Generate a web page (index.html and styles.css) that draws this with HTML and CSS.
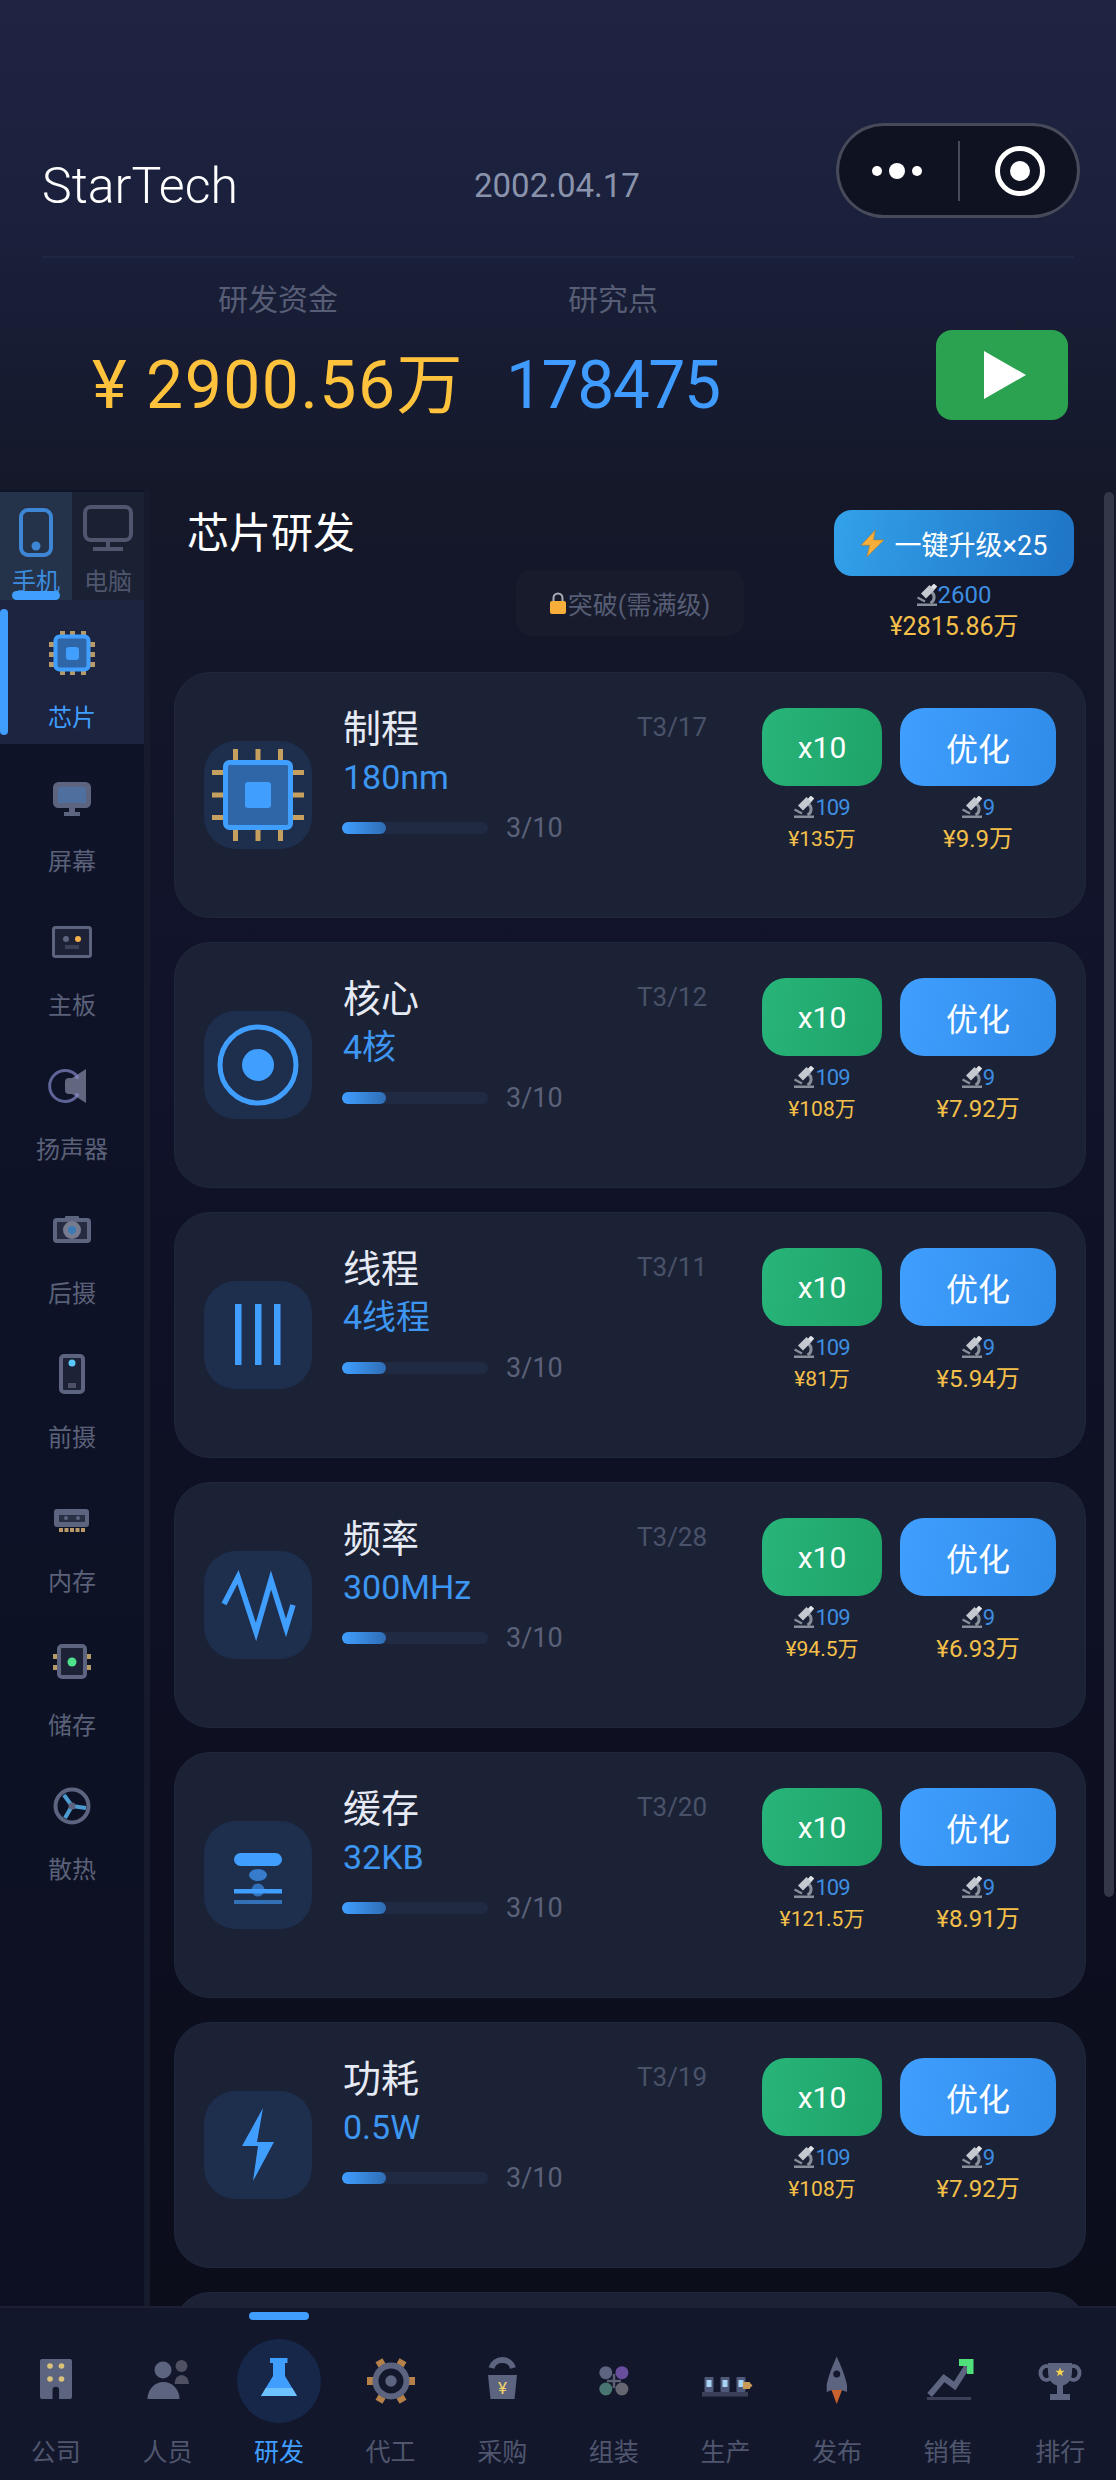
FILE: index.html
```html
<!DOCTYPE html>
<html lang="zh-CN">
  <head>
    <meta charset="UTF-8" />
    <meta name="viewport" content="width=device-width, initial-scale=1.0" />
    <title>StarTech</title>
    <link rel="stylesheet" href="styles.css">
  </head>
  <body>
    <svg class="defs" width="0" height="0">
      <symbol id="scope" viewBox="0 0 20 22">
        <path d="M0 19.500h20V22H0z" fill="#87909a"/>
        <path d="M0.500 13.500L8 17.500" stroke="#87909a" stroke-width="2.400" fill="none"/>
        <path d="M14.500 8a6.500 6.500 0 0 1-1 11" stroke="#87909a" stroke-width="3" fill="none"/>
        <path d="M15 3.500L6.500 12" stroke="#c4c9d0" stroke-width="7" fill="none"/>
        <path d="M18.500 1L15.500 4.500" stroke="#dfe2e6" stroke-width="4.500" fill="none"/>
      </symbol>
    </svg>

    <header class="top">
      <div class="capsule">
        <svg width="240" height="95" viewBox="0 0 240 95">
          <circle cx="39" cy="48" r="5" fill="#fff"/>
          <circle cx="59" cy="48" r="8" fill="#fff"/>
          <circle cx="79" cy="48" r="5" fill="#fff"/>
          <rect x="120" y="18" width="2" height="60" fill="#474a5a"/>
          <circle cx="182" cy="48" r="22.500" fill="none" stroke="#fff" stroke-width="5"/>
          <circle cx="182" cy="48" r="10" fill="#fff"/>
        </svg>
      </div>
      <div class="top-bar">
        <div class="brand">StarTech</div>
        <div class="date">2002.04.17</div>
      </div>
      <div class="stats">
        <div class="stat stat-money">
          <div class="stat-label">研发资金</div>
          <div class="stat-value money">¥ 2900.56万</div>
        </div>
        <div class="stat stat-points">
          <div class="stat-label">研究点</div>
          <div class="stat-value points">178475</div>
        </div>
        <button class="play">
          <svg width="42" height="48" viewBox="0 0 42 48"><path d="M0 0L42 24 0 48z" fill="#fff"/></svg>
        </button>
      </div>
    </header>

    <main class="main">
      <aside class="sidebar">
        <div class="device-tabs">
          <div class="device device-active">
            <svg width="72" height="66" viewBox="0 0 72 66">
              <rect x="21" y="18" width="30" height="45" rx="7" fill="none" stroke="#3d86d6" stroke-width="4"/>
              <circle cx="36" cy="54" r="4.500" fill="#3d86d6"/>
            </svg>
            <span>手机</span>
          </div>
          <div class="device">
            <svg width="72" height="66" viewBox="0 0 72 66">
              <rect x="13" y="15" width="46" height="33" rx="6" fill="none" stroke="#4f566e" stroke-width="4"/>
              <rect x="34" y="50" width="4" height="6" fill="#4f566e"/>
              <rect x="21" y="55" width="30" height="4" fill="#4f566e"/>
            </svg>
            <span>电脑</span>
          </div>
        </div>

        <div class="side-item side-active">
          <svg width="48" height="48" viewBox="0 0 48 48">
            <g fill="#b89a68">
              <rect x="12" y="2" width="5" height="6"/><rect x="22" y="2" width="5" height="6"/><rect x="33" y="2" width="5" height="6"/>
              <rect x="12" y="40" width="5" height="6"/><rect x="22" y="40" width="5" height="6"/><rect x="33" y="40" width="5" height="6"/>
              <rect x="1" y="13" width="6" height="5"/><rect x="1" y="23" width="6" height="5"/><rect x="1" y="33" width="6" height="5"/>
              <rect x="41" y="13" width="6" height="5"/><rect x="41" y="23" width="6" height="5"/><rect x="41" y="33" width="6" height="5"/>
            </g>
            <rect x="7.500" y="7.500" width="33" height="33" rx="4" fill="#2f66a8" stroke="#409eff" stroke-width="4"/>
            <rect x="18" y="18" width="13" height="13" rx="3" fill="#409eff"/>
          </svg>
          <span>芯片</span>
        </div>
        <div class="side-item">
          <svg width="48" height="48" viewBox="0 0 48 48">
            <rect x="7.500" y="11.500" width="33" height="21" rx="3" fill="#4f6f9e" stroke="#5d6480" stroke-width="5"/>
            <rect x="21" y="35" width="6" height="4" fill="#5d6480"/>
            <rect x="16" y="39" width="16" height="4" fill="#5d6480"/>
          </svg>
          <span>屏幕</span>
        </div>
        <div class="side-item">
          <svg width="48" height="48" viewBox="0 0 48 48">
            <rect x="5.500" y="10.500" width="37" height="29" rx="2" fill="#1d2236" stroke="#5d6480" stroke-width="3"/>
            <circle cx="18" cy="22" r="3" fill="#5d6480"/>
            <circle cx="30" cy="22" r="3" fill="#f5b04c"/>
            <rect x="17" y="28" width="14" height="4" fill="#3b4058"/>
          </svg>
          <span>主板</span>
        </div>
        <div class="side-item">
          <svg width="48" height="48" viewBox="0 0 48 48">
            <path d="M29 15a15.500 15.500 0 1 0 0 20" fill="none" stroke="#5f6499" stroke-width="3"/>
            <rect x="17" y="17" width="10" height="16" rx="4" fill="#62677f"/>
            <path d="M24 17L38 8V42L24 33z" fill="#62677f"/>
            <circle cx="29" cy="16" r="2" fill="#7d80b8"/>
            <circle cx="29" cy="34" r="2" fill="#7d80b8"/>
          </svg>
          <span>扬声器</span>
        </div>
        <div class="side-item">
          <svg width="48" height="48" viewBox="0 0 48 48">
            <rect x="17" y="11" width="14" height="4" rx="1" fill="#5d6480"/>
            <rect x="7" y="15" width="34" height="21" rx="2" fill="#272b42" stroke="#5d6480" stroke-width="4"/>
            <circle cx="24" cy="25" r="9" fill="#767b90"/>
            <circle cx="24" cy="25" r="4" fill="#3a7ab5"/>
          </svg>
          <span>后摄</span>
        </div>
        <div class="side-item">
          <svg width="48" height="48" viewBox="0 0 48 48">
            <rect x="13" y="7" width="22" height="36" rx="3" fill="#1d2236" stroke="#5d6480" stroke-width="4"/>
            <circle cx="24" cy="14" r="3.500" fill="#5ac8ff"/>
            <rect x="20" y="34" width="8" height="5" fill="#4b5068"/>
          </svg>
          <span>前摄</span>
        </div>
        <div class="side-item">
          <svg width="48" height="48" viewBox="0 0 48 48">
            <rect x="6" y="16" width="35" height="18" rx="3" fill="#5d6480"/>
            <rect x="11" y="22" width="26" height="7" fill="#2b2f45"/>
            <circle cx="18" cy="25" r="2" fill="#5d6480"/>
            <circle cx="30" cy="25" r="2" fill="#5d6480"/>
            <g fill="#b89a68">
              <rect x="11" y="35" width="4" height="4"/><rect x="16.500" y="35" width="4" height="4"/><rect x="22" y="35" width="4" height="4"/><rect x="27.500" y="35" width="4" height="4"/><rect x="33" y="35" width="4" height="4"/>
            </g>
          </svg>
          <span>内存</span>
        </div>
        <div class="side-item">
          <svg width="48" height="48" viewBox="0 0 48 48">
            <g fill="#b89a68">
              <rect x="5" y="17" width="6" height="5"/><rect x="5" y="28" width="6" height="5"/>
              <rect x="37" y="17" width="6" height="5"/><rect x="37" y="28" width="6" height="5"/>
            </g>
            <rect x="11" y="9" width="26" height="31" rx="3" fill="#1d2236" stroke="#5d6480" stroke-width="4"/>
            <circle cx="24" cy="25" r="4.500" fill="#4ee08a"/>
          </svg>
          <span>储存</span>
        </div>
        <div class="side-item">
          <svg width="48" height="48" viewBox="0 0 48 48">
            <g stroke="#4b9bd0" stroke-width="4"><path d="M24 25L16 14"/><path d="M24 25L38 27"/><path d="M24 25L17 37"/></g>
            <circle cx="24" cy="25" r="16.500" fill="none" stroke="#5d6480" stroke-width="4"/>
            <circle cx="24" cy="25" r="3.500" fill="#5d6480"/>
          </svg>
          <span>散热</span>
        </div>
      </aside>

      <section class="content">
        <div class="scroll-thumb"></div>
        <div class="head">
          <h1 class="head-title">芯片研发</h1>
          <div class="locked">
            <svg width="16" height="22" viewBox="0 0 16 22">
              <path d="M3.500 10V6a4.500 4.500 0 0 1 9 0v4" fill="none" stroke="#a9adb8" stroke-width="2"/>
              <rect y="9" width="16" height="13" rx="2" fill="#f8ae3a"/>
            </svg>
            <span>突破(需满级)</span>
          </div>
          <div class="upgrade-all">
            <button class="upgrade-btn">
              <svg width="23" height="27" viewBox="0 0 24 30" preserveAspectRatio="none"><path d="M15 0L0 17h9L6 30 24 11H13z" fill="#f8ae3a" stroke="#a8752a" stroke-width=".6"/></svg>
              <span>一键升级×25</span>
            </button>
            <div class="cost"><svg class="scope" width="20" height="22"><use href="#scope"/></svg>2600</div>
            <div class="price">¥2815.86万</div>
          </div>
        </div>

        <div class="cards">
          <div class="card">
            <svg class="card-icon" width="108" height="108" viewBox="0 0 108 108">
              <g fill="#c5a05f">
                <rect x="29" y="8" width="5" height="11"/><rect x="51.500" y="8" width="5" height="11"/><rect x="74" y="8" width="5" height="11"/>
                <rect x="29" y="89" width="5" height="11"/><rect x="51.500" y="89" width="5" height="11"/><rect x="74" y="89" width="5" height="11"/>
                <rect x="8" y="29" width="11" height="5"/><rect x="8" y="51.500" width="11" height="5"/><rect x="8" y="74" width="11" height="5"/>
                <rect x="89" y="29" width="11" height="5"/><rect x="89" y="51.500" width="11" height="5"/><rect x="89" y="74" width="11" height="5"/>
              </g>
              <rect x="21.500" y="21.500" width="65" height="65" rx="4" fill="#2f66a8" stroke="#409eff" stroke-width="5"/>
              <rect x="41" y="41" width="26" height="26" rx="3" fill="#409eff"/>
            </svg>
            <div class="info">
              <div class="info-top"><div class="name">制程</div><div class="tier">T3/17</div></div>
              <div class="spec">180nm</div>
              <div class="level"><div class="bar"><div class="bar-fill"></div></div><span>3/10</span></div>
            </div>
            <div class="actions">
              <div class="action"><button class="btn btn-green">x10</button><div class="cost"><svg class="scope" width="20" height="22"><use href="#scope"/></svg>109</div><div class="price">¥135万</div></div>
              <div class="action"><button class="btn btn-blue">优化</button><div class="cost"><svg class="scope" width="20" height="22"><use href="#scope"/></svg>9</div><div class="price price-big">¥9.9万</div></div>
            </div>
          </div>

          <div class="card">
            <svg class="card-icon" width="108" height="108" viewBox="0 0 108 108">
              <circle cx="54" cy="54" r="38" fill="none" stroke="#409eff" stroke-width="5"/>
              <circle cx="54" cy="54" r="16" fill="#409eff"/>
            </svg>
            <div class="info">
              <div class="info-top"><div class="name">核心</div><div class="tier">T3/12</div></div>
              <div class="spec">4核</div>
              <div class="level"><div class="bar"><div class="bar-fill"></div></div><span>3/10</span></div>
            </div>
            <div class="actions">
              <div class="action"><button class="btn btn-green">x10</button><div class="cost"><svg class="scope" width="20" height="22"><use href="#scope"/></svg>109</div><div class="price">¥108万</div></div>
              <div class="action"><button class="btn btn-blue">优化</button><div class="cost"><svg class="scope" width="20" height="22"><use href="#scope"/></svg>9</div><div class="price price-big">¥7.92万</div></div>
            </div>
          </div>

          <div class="card">
            <svg class="card-icon" width="108" height="108" viewBox="0 0 108 108">
              <g fill="#409eff"><rect x="31" y="23" width="6.500" height="61"/><rect x="51" y="23" width="6.500" height="61"/><rect x="70" y="23" width="6.500" height="61"/></g>
            </svg>
            <div class="info">
              <div class="info-top"><div class="name">线程</div><div class="tier">T3/11</div></div>
              <div class="spec">4线程</div>
              <div class="level"><div class="bar"><div class="bar-fill"></div></div><span>3/10</span></div>
            </div>
            <div class="actions">
              <div class="action"><button class="btn btn-green">x10</button><div class="cost"><svg class="scope" width="20" height="22"><use href="#scope"/></svg>109</div><div class="price">¥81万</div></div>
              <div class="action"><button class="btn btn-blue">优化</button><div class="cost"><svg class="scope" width="20" height="22"><use href="#scope"/></svg>9</div><div class="price price-big">¥5.94万</div></div>
            </div>
          </div>

          <div class="card">
            <svg class="card-icon" width="108" height="108" viewBox="0 0 108 108">
              <path d="M20 53L34 26 52 81 67 29 82 77 89 54" fill="none" stroke="#409eff" stroke-width="5.500"/>
            </svg>
            <div class="info">
              <div class="info-top"><div class="name">频率</div><div class="tier">T3/28</div></div>
              <div class="spec">300MHz</div>
              <div class="level"><div class="bar"><div class="bar-fill"></div></div><span>3/10</span></div>
            </div>
            <div class="actions">
              <div class="action"><button class="btn btn-green">x10</button><div class="cost"><svg class="scope" width="20" height="22"><use href="#scope"/></svg>109</div><div class="price">¥94.5万</div></div>
              <div class="action"><button class="btn btn-blue">优化</button><div class="cost"><svg class="scope" width="20" height="22"><use href="#scope"/></svg>9</div><div class="price price-big">¥6.93万</div></div>
            </div>
          </div>

          <div class="card">
            <svg class="card-icon" width="108" height="108" viewBox="0 0 108 108">
              <rect x="30" y="32" width="48" height="13" rx="6.500" fill="#409eff"/>
              <ellipse cx="54" cy="54" rx="9" ry="6" fill="#409eff" opacity=".7"/>
              <rect x="30" y="68" width="48" height="4.500" fill="#409eff"/>
              <ellipse cx="54" cy="69" rx="6.500" ry="6.500" fill="#409eff" opacity=".6"/>
              <rect x="30" y="79" width="48" height="4" fill="#409eff" opacity=".6"/>
            </svg>
            <div class="info">
              <div class="info-top"><div class="name">缓存</div><div class="tier">T3/20</div></div>
              <div class="spec">32KB</div>
              <div class="level"><div class="bar"><div class="bar-fill"></div></div><span>3/10</span></div>
            </div>
            <div class="actions">
              <div class="action"><button class="btn btn-green">x10</button><div class="cost"><svg class="scope" width="20" height="22"><use href="#scope"/></svg>109</div><div class="price">¥121.5万</div></div>
              <div class="action"><button class="btn btn-blue">优化</button><div class="cost"><svg class="scope" width="20" height="22"><use href="#scope"/></svg>9</div><div class="price price-big">¥8.91万</div></div>
            </div>
          </div>

          <div class="card">
            <svg class="card-icon" width="108" height="108" viewBox="0 0 108 108">
              <path d="M59 17L38 55H54L49 90 70 51H53z" fill="#409eff"/>
            </svg>
            <div class="info">
              <div class="info-top"><div class="name">功耗</div><div class="tier">T3/19</div></div>
              <div class="spec">0.5W</div>
              <div class="level"><div class="bar"><div class="bar-fill"></div></div><span>3/10</span></div>
            </div>
            <div class="actions">
              <div class="action"><button class="btn btn-green">x10</button><div class="cost"><svg class="scope" width="20" height="22"><use href="#scope"/></svg>109</div><div class="price">¥108万</div></div>
              <div class="action"><button class="btn btn-blue">优化</button><div class="cost"><svg class="scope" width="20" height="22"><use href="#scope"/></svg>9</div><div class="price price-big">¥7.92万</div></div>
            </div>
          </div>

          <div class="card"></div>
        </div>
      </section>
    </main>

    <nav class="tabbar">
      <div class="tab">
        <svg width="84" height="84" viewBox="0 0 84 84">
          <rect x="26" y="20" width="32" height="40" rx="2" fill="#5d6480"/>
          <g fill="#d9c27a"><circle cx="36" cy="27" r="2.800"/><circle cx="47.500" cy="27" r="2.800"/><circle cx="36" cy="40" r="2.800"/><circle cx="47.500" cy="40" r="2.800"/></g>
          <path d="M38.500 60V51a3.300 3.300 0 0 1 6.600 0v9z" fill="#14182c"/>
        </svg>
        <span>公司</span>
      </div>
      <div class="tab">
        <svg width="84" height="84" viewBox="0 0 84 84">
          <circle cx="56.500" cy="27" r="6" fill="#4f5163"/>
          <path d="M49.500 45a7.200 9 0 0 1 14.500 0z" fill="#4f5163"/>
          <circle cx="38" cy="31" r="8.500" fill="#5d6480"/>
          <path d="M22.500 60a16 17 0 0 1 32 0z" fill="#5d6480"/>
        </svg>
        <span>人员</span>
      </div>
      <div class="tab tab-active">
        <svg width="84" height="84" viewBox="0 0 84 84">
          <path d="M33 19H50.500V24H48V37L60 57H24L36 37V24H33z" fill="#409eff"/>
          <path d="M28.800 49H55.200L60 57H24z" fill="#6ec1ff"/>
        </svg>
        <span>研发</span>
      </div>
      <div class="tab">
        <svg width="84" height="84" viewBox="0 0 84 84">
          <g fill="#b58148">
            <rect x="18" y="38" width="6" height="8"/><rect x="60" y="38" width="6" height="8"/>
            <rect x="18" y="38" width="6" height="8" transform="rotate(60 42 42)"/><rect x="60" y="38" width="6" height="8" transform="rotate(60 42 42)"/>
            <rect x="18" y="38" width="6" height="8" transform="rotate(120 42 42)"/><rect x="60" y="38" width="6" height="8" transform="rotate(120 42 42)"/>
          </g>
          <circle cx="42" cy="42" r="15.500" fill="#14182c" stroke="#5d6480" stroke-width="6"/>
          <circle cx="42" cy="42" r="5.700" fill="#5d6480"/>
        </svg>
        <span>代工</span>
      </div>
      <div class="tab">
        <svg width="84" height="84" viewBox="0 0 84 84">
          <path d="M31.500 29a11 10 0 0 1 21.500 0" fill="none" stroke="#5d6480" stroke-width="6"/>
          <path d="M28 36H57L54.500 60H30.500z" fill="#5d6480"/>
          <text class="bag-yen" x="42.500" y="55">¥</text>
        </svg>
        <span>采购</span>
      </div>
      <div class="tab">
        <svg width="84" height="84" viewBox="0 0 84 84">
          <circle cx="33.800" cy="33.700" r="6.500" fill="#5d6480"/>
          <circle cx="49.900" cy="33.700" r="6.500" fill="#6a4f9e"/>
          <circle cx="33.800" cy="50" r="6.500" fill="#4a7570"/>
          <circle cx="49.900" cy="50" r="6.500" fill="#666672"/>
          <path d="M42 35V49M35 42H49" stroke="#8a8fa3" stroke-width="2.500" opacity=".6"/>
        </svg>
        <span>组装</span>
      </div>
      <div class="tab">
        <svg width="84" height="84" viewBox="0 0 84 84">
          <rect x="19" y="53" width="46" height="4.500" fill="#3b4058"/>
          <g fill="#4f5a7a"><rect x="21.500" y="38" width="9" height="15" rx="1"/><rect x="37.500" y="38" width="9" height="15" rx="1"/><rect x="53.500" y="38" width="9" height="15" rx="1"/></g>
          <g fill="#a8d4f5"><rect x="23.500" y="41" width="5" height="7"/><rect x="39.500" y="41" width="5" height="7"/><rect x="55.500" y="41" width="5" height="7"/></g>
          <rect x="60" y="43" width="7" height="7" fill="#c99a55"/>
          <path d="M67 44L69.500 46.500 67 49z" fill="#c99a55"/>
        </svg>
        <span>生产</span>
      </div>
      <div class="tab">
        <svg width="84" height="84" viewBox="0 0 84 84">
          <path d="M41.700 17.500C37 28 33 38 31.700 46V53L37 51H46.500L52 53V46C50.500 38 46.500 28 41.700 17.500z" fill="#5d6480"/>
          <circle cx="41.700" cy="35" r="3.500" fill="#14182c"/>
          <path d="M36.500 51H47L41.700 65z" fill="#c9622c"/>
        </svg>
        <span>发布</span>
      </div>
      <div class="tab">
        <svg width="84" height="84" viewBox="0 0 84 84">
          <rect x="20" y="58" width="44" height="3" fill="#3b4058"/>
          <path d="M22.600 56L37 39 47.700 47 60 27.700" fill="none" stroke="#5d6480" stroke-width="6"/>
          <path d="M52 20H66.500V35H60V27L52 27z" fill="#4fe07a"/>
        </svg>
        <span>销售</span>
      </div>
      <div class="tab">
        <svg width="84" height="84" viewBox="0 0 84 84">
          <ellipse cx="28.500" cy="34" rx="6" ry="7" fill="none" stroke="#5d6480" stroke-width="4"/>
          <ellipse cx="55.500" cy="34" rx="6" ry="7" fill="none" stroke="#5d6480" stroke-width="4"/>
          <path d="M30 24H54V33C54 42 48 47 42 47S30 42 30 33z" fill="#5d6480"/>
          <rect x="39" y="46" width="6" height="9" fill="#5d6480"/>
          <rect x="32" y="55" width="20" height="6" fill="#5d6480"/>
          <path d="M42 28.500L43.200 31.700 46.500 31.800 43.900 33.900 44.800 37.200 42 35.300 39.200 37.200 40.100 33.900 37.500 31.800 40.800 31.700z" fill="#f5d34e"/>
        </svg>
        <span>排行</span>
      </div>
    </nav>
  </body>
</html>
```

FILE: styles.css
```css
* {
  box-sizing: border-box;
}
html, body {
  margin: 0;
  padding: 0;
}
body {
  position: relative;
  width: 1116px;
  height: 2480px;
  overflow: hidden;
  font-family: Roboto, "Noto Sans CJK SC", sans-serif;
  color: #fff;
  background: linear-gradient(#1f2443 0, #1a1f3a 250px, #141829 490px, #10132a 1000px, #0b0d1b 2304px);
}
.defs {
  position: absolute;
}
button {
  border: 0;
  padding: 0;
  font-family: inherit;
  color: #fff;
}

/* header */
.top {
  height: 490px;
}
.capsule {
  position: absolute;
  left: 836px;
  top: 123px;
  width: 244px;
  height: 95px;
  padding-left: 2px;
  background: #0f1220;
  border-radius: 48px;
  box-shadow: inset 0 0 0 3px #474a5a;
}
.capsule svg {
  display: block;
}
.top-bar {
  display: flex;
  align-items: center;
  height: 258px;
  margin: 0 42px;
  padding-top: 114px;
  border-bottom: 2px solid #1f2642;
}
.brand {
  width: 432px;
  margin-top: 2px;
  font-size: 50px;
  font-weight: 300;
  line-height: 68px;
}
.date {
  font-size: 33px;
  color: #8a93ac;
}
.stats {
  display: flex;
  padding: 22px 48px 0 92px;
}
.stat-label {
  font-size: 30px;
  line-height: 40px;
  text-align: center;
  color: #565d75;
}
.stat-value {
  margin-top: 21px;
  font-size: 66px;
  line-height: 90px;
  white-space: nowrap;
}
.stat-money {
  width: 372px;
}
.stat-points {
  width: 214px;
  margin-left: 42px;
}
.money {
  color: #ffc23d;
  letter-spacing: 1.5px;
}
.points {
  color: #3f9bff;
  letter-spacing: -1.5px;
}
.play {
  display: flex;
  justify-content: center;
  align-items: center;
  width: 132px;
  height: 90px;
  margin: 50px 0 0 auto;
  padding-left: 6px;
  background: #2ba24f;
  border-radius: 16px;
}

/* main */
.main {
  display: flex;
  height: 1816px;
  overflow: hidden;
}
.sidebar {
  flex: none;
  width: 150px;
  padding-top: 2px;
  border-right: 6px solid #151a2c;
  background: linear-gradient(#10142a, #0c1022);
}
.device-tabs {
  display: grid;
  grid-template-columns: 72px 72px;
  height: 108px;
}
.device {
  position: relative;
  text-align: center;
  font-size: 24px;
  line-height: 30px;
  color: #4f566e;
  background: #1a2133;
}
.device svg {
  display: block;
  margin-bottom: 9px;
}
.device-active {
  color: #3d8de0;
  background: #243349;
}
.device-active::after {
  content: "";
  position: absolute;
  left: 12px;
  bottom: 0;
  width: 48px;
  height: 9px;
  border-radius: 5px;
  background: #409eff;
}
.side-item {
  position: relative;
  height: 144px;
  padding-top: 29px;
  text-align: center;
  font-size: 24px;
  line-height: 30px;
  color: #5a6178;
}
.side-item svg {
  display: block;
  margin: 0 auto 26px;
}
.side-active {
  color: #409eff;
  background: #1c2440;
}
.side-active::before {
  content: "";
  position: absolute;
  left: 0;
  top: 9px;
  width: 8px;
  height: 126px;
  border-radius: 4px;
  background: #409eff;
}

/* content */
.content {
  position: relative;
  flex: 1;
  overflow: hidden;
}
.scroll-thumb {
  position: absolute;
  right: 2px;
  top: 2px;
  width: 10px;
  height: 1405px;
  border-radius: 5px;
  background: #333748;
}
.head {
  display: flex;
  height: 182px;
  padding: 20px 0 0 37px;
}
.head-title {
  width: 329px;
  margin: 0;
  font-size: 42px;
  line-height: 48px;
  font-weight: 400;
}
.locked {
  display: flex;
  justify-content: center;
  align-items: center;
  gap: 2px;
  width: 228px;
  height: 66px;
  margin-top: 60px;
  border-radius: 16px;
  background: #181b2b;
  font-size: 25px;
  color: #565d75;
}
.upgrade-all {
  width: 240px;
  margin-left: 90px;
  text-align: center;
}
.upgrade-btn {
  display: flex;
  justify-content: center;
  align-items: center;
  gap: 11px;
  width: 240px;
  height: 66px;
  border-radius: 18px;
  font-size: 27px;
  background: linear-gradient(100deg, #33a1ea, #1f74c6);
}
.cost {
  display: flex;
  justify-content: center;
  align-items: center;
  height: 28px;
  margin-top: 5px;
  font-size: 24px;
  color: #3d8de0;
}
.scope {
  margin-right: 1px;
}
.price {
  margin-top: 3px;
  font-size: 21px;
  line-height: 30px;
  color: #f5c04a;
}
.upgrade-all .price {
  font-size: 25px;
}
.price-big {
  font-size: 24px;
}
.cards {
  display: flex;
  flex-direction: column;
  gap: 24px;
  width: 912px;
  margin-left: 24px;
}
.card {
  flex: none;
  display: flex;
  height: 246px;
  padding: 35px 0 0 29px;
  border: 1px solid #20273c;
  border-radius: 36px;
  background: #1c2236;
}
.card-icon {
  flex: none;
  margin-top: 33px;
  border-radius: 32px;
  background: #1e2e4d;
}
.info {
  flex: none;
  width: 450px;
  padding-left: 31px;
}
.info-top {
  display: flex;
  align-items: center;
  height: 36px;
}
.name {
  width: 294px;
  margin-top: -2px;
  font-size: 38px;
  color: #e6eaf5;
}
.tier {
  margin-top: 2px;
  font-size: 26px;
  color: #4a5269;
}
.spec {
  margin-top: 12px;
  font-size: 34px;
  line-height: 42px;
  color: #3d96f2;
}
.level {
  display: flex;
  align-items: center;
  height: 34px;
  margin-top: 13px;
  font-size: 27px;
  color: #5a6178;
}
.bar {
  width: 146px;
  height: 12px;
  margin: 0 18px 0 -1px;
  border-radius: 6px;
  background: #212a43;
}
.bar-fill {
  width: 30%;
  height: 100%;
  border-radius: 6px;
  background: linear-gradient(90deg, #409eff, #2f6db5);
}
.actions {
  display: grid;
  grid-template-columns: 120px 156px;
  gap: 18px;
}
.action {
  text-align: center;
}
.action .cost {
  margin-top: 7px;
  font-size: 22px;
  letter-spacing: -1px;
}
.btn {
  display: block;
  width: 100%;
  height: 78px;
  border-radius: 24px;
  font-size: 32px;
}
.btn-green {
  font-size: 30px;
  background: linear-gradient(100deg, #28b47a, #1ea368);
}
.btn-blue {
  background: linear-gradient(100deg, #409eff, #2f8ce8);
}

/* bottom nav */
.tabbar {
  position: absolute;
  left: 0;
  bottom: 0;
  display: grid;
  grid-template-columns: repeat(10, 1fr);
  width: 1116px;
  height: 174px;
  padding: 0;
  border-top: 2px solid #1b2034;
  background: #13172b;
}
.tab {
  position: relative;
  display: flex;
  flex-direction: column;
  align-items: center;
  padding-top: 31px;
  font-size: 25px;
  line-height: 34px;
  color: #4f566e;
}
.tab svg {
  display: block;
  margin-bottom: 13px;
  border-radius: 50%;
}
.tab-active {
  color: #409eff;
}
.tab-active svg {
  background: #16274a;
}
.tab-active::before {
  content: "";
  position: absolute;
  top: 4px;
  left: 26px;
  width: 60px;
  height: 8px;
  border-radius: 4px;
  background: #409eff;
}
.bag-yen {
  font-size: 17px;
  text-anchor: middle;
  fill: #f1d36a;
}
```
